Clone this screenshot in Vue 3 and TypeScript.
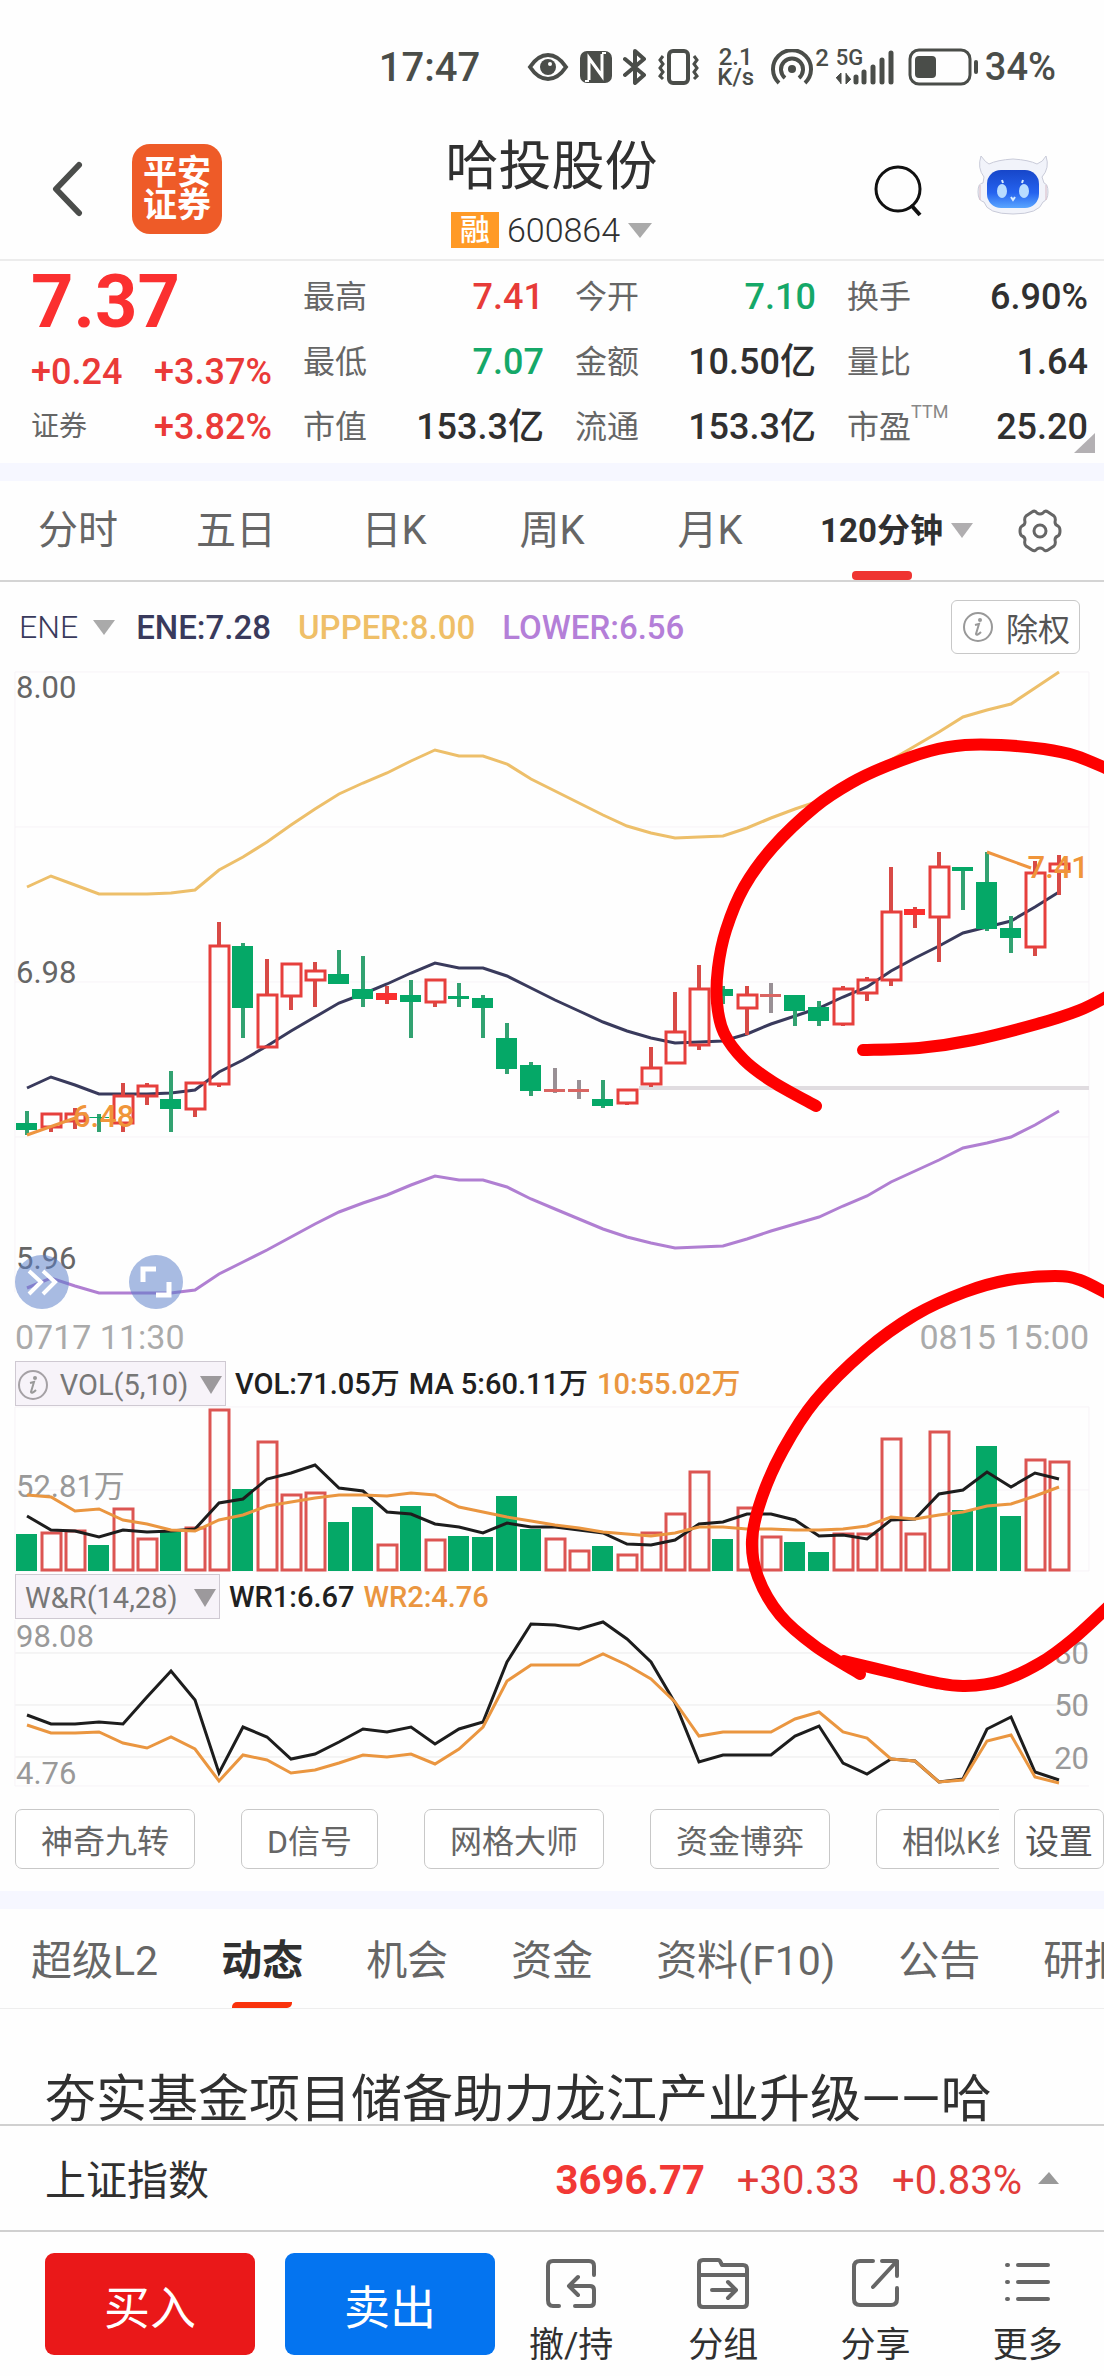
<script setup lang="ts">
type Kind = 'up' | 'down' | 'flat' | 'solid'
interface Candle { kind: Kind; high: number; top: number; bottom: number; low: number }
type Point = [number, number]

const STEP = 24
const FIRST = 27
const xAt = (i: number): number => FIRST + i * STEP
const line = (ys: number[]): string => ys.map((y, i) => `${xAt(i)},${y}`).join(' ')

const rawCandles: [Kind, number, number, number, number][] = [
  ['down', 1111, 1123, 1130, 1135], ['up', 1113, 1113, 1128, 1132], ['up', 1108, 1113, 1122, 1129],
  ['down', 1114, 1117, 1118, 1132], ['up', 1083, 1095, 1124, 1132], ['up', 1083, 1085, 1097, 1105],
  ['down', 1071, 1099, 1109, 1132], ['up', 1082, 1082, 1110, 1117], ['up', 922, 945, 1085, 1087],
  ['down', 943, 946, 1008, 1038], ['up', 959, 994, 1048, 1048], ['up', 963, 963, 997, 1010],
  ['up', 962, 970, 981, 1007], ['down', 950, 974, 984, 984], ['down', 956, 989, 999, 1007],
  ['solid', 986, 993, 1000, 1004], ['down', 980, 995, 1002, 1038], ['up', 979, 979, 1003, 1007],
  ['down', 983, 996, 999, 1007], ['down', 995, 998, 1008, 1038], ['down', 1023, 1038, 1069, 1074],
  ['down', 1062, 1065, 1091, 1096], ['flat', 1068, 1089, 1092, 1093], ['flat', 1080, 1089, 1092, 1099],
  ['down', 1080, 1099, 1106, 1108], ['up', 1089, 1089, 1104, 1105], ['up', 1047, 1067, 1085, 1087],
  ['up', 992, 1031, 1064, 1064], ['up', 965, 988, 1046, 1050], ['down', 986, 989, 996, 1004],
  ['up', 986, 994, 1009, 1035], ['flat', 983, 994, 997, 1013], ['down', 995, 995, 1011, 1026],
  ['down', 1001, 1007, 1021, 1026], ['up', 986, 988, 1025, 1026], ['up', 977, 979, 994, 1001],
  ['up', 867, 911, 981, 986], ['solid', 907, 909, 915, 928], ['up', 852, 866, 918, 962],
  ['down', 867, 867, 871, 910], ['down', 852, 882, 929, 931], ['down', 916, 928, 938, 953],
  ['up', 861, 872, 948, 956], ['up', 855, 863, 872, 895],
]
const candles: Candle[] = rawCandles.map(([kind, high, top, bottom, low]) => ({ kind, high, top, bottom, low }))

/* Hollow bodies are transparent, so their wick stops at the body's edges */
const wick = (c: Candle, i: number): string =>
  c.kind === 'up'
    ? `M${xAt(i)} ${c.high}V${c.top}M${xAt(i)} ${c.bottom}V${c.low}`
    : `M${xAt(i)} ${c.high}V${c.low}`

const upper = [887, 876, 885, 894, 894, 894, 893, 890, 870, 857, 842, 825, 809, 794, 783, 773, 761, 750, 756, 756, 764, 779, 791, 803, 815, 826, 833, 838, 837, 836, 828, 818, 809, 801, 787, 777, 760, 746, 732, 717, 710, 704, 688, 672]
const ene = [1088, 1077, 1085, 1094, 1094, 1094, 1093, 1090, 1072, 1060, 1046, 1031, 1017, 1003, 994, 984, 973, 963, 968, 968, 976, 988, 1000, 1011, 1022, 1031, 1038, 1043, 1042, 1041, 1034, 1024, 1016, 1008, 997, 987, 971, 958, 946, 933, 927, 921, 907, 892]
const lower = [1288, 1278, 1286, 1293, 1293, 1293, 1293, 1290, 1274, 1262, 1250, 1237, 1224, 1212, 1203, 1195, 1185, 1176, 1180, 1180, 1187, 1199, 1209, 1219, 1229, 1237, 1243, 1248, 1247, 1246, 1239, 1231, 1224, 1217, 1206, 1196, 1182, 1171, 1160, 1148, 1143, 1137, 1125, 1111]

const BASE = 1571
const volumeTops = [1534, 1532, 1530, 1545, 1508, 1538, 1531, 1527, 1409, 1489, 1441, 1494, 1492, 1522, 1507, 1544, 1506, 1539, 1536, 1537, 1496, 1529, 1538, 1550, 1546, 1554, 1532, 1513, 1471, 1539, 1507, 1536, 1542, 1552, 1533, 1533, 1438, 1533, 1431, 1510, 1446, 1516, 1459, 1461]
const ma5 = [1516, 1530, 1531, 1537, 1530, 1532, 1531, 1529, 1503, 1499, 1479, 1473, 1465, 1488, 1491, 1512, 1514, 1524, 1527, 1533, 1523, 1527, 1527, 1530, 1533, 1544, 1545, 1540, 1524, 1522, 1514, 1514, 1520, 1536, 1535, 1539, 1520, 1519, 1494, 1490, 1472, 1487, 1473, 1479]
const ma10 = [1495, 1497, 1511, 1509, 1520, 1524, 1530, 1531, 1520, 1515, 1506, 1502, 1498, 1495, 1495, 1496, 1493, 1495, 1507, 1512, 1517, 1521, 1525, 1528, 1532, 1534, 1536, 1533, 1527, 1527, 1529, 1529, 1530, 1530, 1529, 1526, 1517, 1519, 1515, 1512, 1506, 1504, 1496, 1487]

const wr1 = [1715, 1724, 1724, 1722, 1724, 1697, 1671, 1700, 1773, 1727, 1737, 1759, 1754, 1742, 1729, 1732, 1727, 1744, 1729, 1722, 1662, 1624, 1625, 1629, 1622, 1639, 1662, 1703, 1762, 1755, 1755, 1755, 1736, 1726, 1763, 1774, 1759, 1761, 1782, 1779, 1729, 1717, 1772, 1780]
const wr2 = [1725, 1733, 1733, 1732, 1743, 1748, 1737, 1749, 1781, 1755, 1760, 1773, 1770, 1763, 1755, 1757, 1754, 1764, 1749, 1727, 1681, 1665, 1665, 1665, 1654, 1665, 1679, 1702, 1736, 1732, 1732, 1732, 1719, 1712, 1732, 1738, 1759, 1761, 1782, 1780, 1741, 1735, 1777, 1783]

/* Catmull-Rom spline through hand-drawn points */
function smooth(p: Point[]): string {
  let d = `M${p[0][0]} ${p[0][1]}`
  for (let i = 0; i < p.length - 1; i++) {
    const a = p[Math.max(i - 1, 0)]
    const b = p[i]
    const c = p[i + 1]
    const e = p[Math.min(i + 2, p.length - 1)]
    d += `C${b[0] + (c[0] - a[0]) / 6} ${b[1] + (c[1] - a[1]) / 6} ${c[0] - (e[0] - b[0]) / 6} ${c[1] - (e[1] - b[1]) / 6} ${c[0]} ${c[1]}`
  }
  return d
}
const marks: string[] = [
  smooth([[816, 1106], [773, 1082], [744, 1060], [724, 1033], [717, 1003], [718, 968], [726, 930], [744, 887], [773, 847], [815, 807], [851, 783], [887, 766], [930, 751], [965, 745], [1001, 745], [1044, 749], [1076, 756], [1110, 770]]),
  smooth([[863, 1050], [919, 1048], [973, 1040], [1037, 1024], [1080, 1010], [1110, 995]]),
  smooth([[1110, 1295], [1080, 1280], [1055, 1276], [1008, 1280], [965, 1292], [915, 1315], [865, 1351], [815, 1401], [783, 1450], [762, 1497], [752, 1540], [758, 1577], [780, 1615], [815, 1646], [860, 1674]]),
  smooth([[844, 1661], [894, 1673], [937, 1683], [965, 1686], [1001, 1681], [1040, 1663], [1073, 1639], [1110, 1605]]),
]

interface Stat { label: string; value: string; tone?: string; sup?: string }
const stats: Stat[] = [
  { label: '最高', value: '7.41', tone: 'red' }, { label: '今开', value: '7.10', tone: 'green' }, { label: '换手', value: '6.90%' },
  { label: '最低', value: '7.07', tone: 'green' }, { label: '金额', value: '10.50亿' }, { label: '量比', value: '1.64' },
  { label: '市值', value: '153.3亿' }, { label: '流通', value: '153.3亿' }, { label: '市盈', value: '25.20', sup: 'TTM' },
]
const periods = ['分时', '五日', '日K', '周K', '月K']
const tools = ['神奇九转', 'D信号', '网格大师', '资金博弈', '相似K线']
const sections = ['超级L2', '动态', '机会', '资金', '资料(F10)', '公告', '研报']
</script>

<template>
  <div class="app">
    <div class="status">
      <span class="clock">17:47</span>
      <svg width="42" height="36" viewBox="0 0 42 36"><path d="M3 18Q11 6 21 6T39 18Q31 30 21 30T3 18Z" fill="none" stroke="currentColor" stroke-width="4" /><circle cx="21" cy="18" r="8" fill="currentColor" /><circle cx="23" cy="15" r="2" fill="#fff" /></svg>
      <svg width="32" height="36" viewBox="0 0 32 36"><rect x="0" y="2" width="32" height="32" rx="7" fill="currentColor" /><path d="M9 31V9L22 27V5" fill="none" stroke="#fff" stroke-width="3" /><path d="M5 32L9 32M22 4L26 4" stroke="#fff" stroke-width="2" /></svg>
      <svg width="24" height="36" viewBox="0 0 24 36"><path d="M2 10L21 26L12 34V2L21 10L2 26" fill="none" stroke="currentColor" stroke-width="4" stroke-linejoin="round" stroke-linecap="round" /></svg>
      <svg width="41" height="36" viewBox="0 0 41 36"><rect x="11" y="2" width="19" height="32" rx="4" fill="none" stroke="currentColor" stroke-width="4" /><path d="M5 7L2 11L5 15L2 19L5 23L2 27L5 30M36 7L39 11L36 15L39 19L36 23L39 27L36 30" fill="none" stroke="currentColor" stroke-width="3" /></svg>
      <span class="speed"><span>2.1</span><span>K/s</span></span>
      <svg width="42" height="36" viewBox="0 0 42 36"><circle cx="21" cy="20" r="4" fill="currentColor" /><path d="M8 34A19 19 0 1 1 34 34M14 29A11 11 0 1 1 28 29" fill="none" stroke="currentColor" stroke-width="4" /></svg>
      <span class="sim">2</span>
      <span class="network">
        <span class="gen">5G</span>
        <svg width="58" height="36" viewBox="0 0 58 36"><path d="M0 29L5 24V35M10 24V35L15 30" fill="currentColor" stroke="currentColor" stroke-width="1" /><path d="M20 33V28M28 33V23M37 33V18M46 33V11M55 33V4" stroke="currentColor" stroke-width="5" stroke-linecap="round" /></svg>
      </span>
      <svg class="battery" width="72" height="38" viewBox="0 0 72 38"><rect x="2" y="2" width="60" height="34" rx="9" fill="none" stroke="currentColor" stroke-width="3" /><rect x="7" y="8" width="21" height="22" rx="4" fill="currentColor" /><path d="M68 14V24" stroke="currentColor" stroke-width="4" stroke-linecap="round" /></svg>
      <span class="charge">34%</span>
    </div>

    <header class="header">
      <button class="plain back" aria-label="返回"><svg width="32" height="56" viewBox="0 0 32 56"><path d="M28 4L5 28L28 52" fill="none" stroke="#4b4d4b" stroke-width="6" stroke-linecap="round" stroke-linejoin="round" /></svg></button>
      <div class="brand"><span>平安</span><span>证券</span></div>
      <div class="title">
        <h1>哈投股份</h1>
        <button class="plain code"><span class="badge">融</span>600864<svg width="24" height="15" viewBox="0 0 24 15"><path d="M0 0H24L12 15Z" fill="#aaa" /></svg></button>
      </div>
      <button class="plain search" aria-label="搜索"><svg width="50" height="54" viewBox="0 0 50 54"><circle cx="25" cy="26" r="22" fill="none" stroke="#111" stroke-width="3" /><path d="M38 42L47 52" stroke="#111" stroke-width="4" /></svg></button>
      <button class="plain bot" aria-label="智能助手">
        <svg width="72" height="60" viewBox="0 0 72 60">
          <defs><linearGradient id="face" x1="0" y1="0" x2="0" y2="1"><stop offset="0" stop-color="#1746c9" /><stop offset=".6" stop-color="#2563ef" /><stop offset="1" stop-color="#5aa6ff" /></linearGradient></defs>
          <path d="M4 1Q9 8 12 9Q20 5 36 4Q52 5 60 9Q66 7 69 1Q73 13 65 22L67 28Q71 29 71 37T66 47Q62 59 36 59T7 47Q1 46 1 37T6 28L7 22Q0 13 4 1Z" fill="#f1f3fa" stroke="#c9cbd9" />
          <path d="M3 30V45M69 30V45" stroke="#d7b9c4" stroke-width="1" />
          <rect x="10" y="15" width="52" height="38" rx="14" fill="url(#face)" />
          <ellipse cx="25" cy="36" rx="5" ry="7" fill="#b8dcff" /><ellipse cx="47" cy="36" rx="5" ry="7" fill="#b8dcff" />
          <path d="M34 42L36 45L38 42M25 25L26 28M46 25L45 28" stroke="#d9ecff" stroke-width="2" fill="none" />
        </svg>
      </button>
    </header>

    <section class="quote">
      <div class="last">
        <strong>7.37</strong>
        <div class="change"><span>+0.24</span><span>+3.37%</span></div>
        <div class="sector"><span class="name">证券</span><span>+3.82%</span></div>
      </div>
      <dl class="stats">
        <div v-for="s in stats" :key="s.label" class="stat">
          <dt>{{ s.label }}<sup v-if="s.sup">{{ s.sup }}</sup></dt>
          <dd :class="s.tone">{{ s.value }}</dd>
        </div>
      </dl>
      <svg class="corner" width="21" height="20" viewBox="0 0 21 20"><path d="M21 0V20H0Z" fill="#b3b0b3" /></svg>
    </section>
    <div class="strip"></div>

    <nav class="periods">
      <button v-for="p in periods" :key="p" class="plain">{{ p }}</button>
      <button class="plain active"><span>120分钟</span><svg width="22" height="15" viewBox="0 0 22 15"><path d="M0 0H22L11 15Z" fill="#b0aeb0" /></svg></button>
      <button class="plain gear" aria-label="图表设置"><svg width="44" height="44" viewBox="0 0 44 44"><path d="M14 3Q17 1 19 4Q22 6 25 4Q27 1 30 3L36 7Q38 9 37 13Q37 16 40 17Q42 18 42 22T40 27Q37 28 37 31Q38 35 36 37L30 41Q27 43 25 40Q22 38 19 40Q17 43 14 41L8 37Q6 35 7 31Q7 28 4 27Q2 26 2 22T4 17Q7 16 7 13Q6 9 8 7Z" fill="none" stroke="#666" stroke-width="3" /><circle cx="22" cy="22" r="6" fill="none" stroke="#666" stroke-width="3" /></svg></button>
    </nav>

    <section class="charts">
      <div class="legend">
        <button class="plain picker">ENE<svg width="22" height="15" viewBox="0 0 22 15"><path d="M0 0H22L11 15Z" fill="#aaa" /></svg></button>
        <span class="navy">ENE:7.28</span><span class="gold">UPPER:8.00</span><span class="violet">LOWER:6.56</span>
        <button class="adjust"><svg width="30" height="30" viewBox="0 0 30 30"><circle cx="15" cy="15" r="14" fill="none" stroke="#999" stroke-width="2" /><circle cx="17" cy="8" r="2" fill="#999" /><path d="M12 13L16 12L13 22Q14 24 18 20" fill="none" stroke="#999" stroke-width="2" /></svg>除权</button>
      </div>

      <svg class="plot" viewBox="0 672 1104 624">
        <path d="M15 672H1089V1292M15 672V1292M15 827H1089M15 982H1089M15 1137H1089" class="grid faint" />
        <g class="axis dark"><text x="16" y="698">8.00</text><text x="16" y="983">6.98</text><text x="16" y="1269">5.96</text></g>
        <path d="M639 1088H1089" stroke="#e0dce0" stroke-width="4" />
        <polyline :points="line(ene)" class="curve" stroke="#393a5c" />
        <g v-for="(c, i) in candles" :key="i">
          <path :d="wick(c, i)" :class="['wick', c.kind]" />
          <rect v-if="c.kind === 'up'" :x="xAt(i) - 9" :y="c.top + 1" width="19" :height="c.bottom - c.top - 2" class="hollow" />
          <rect v-else :x="xAt(i) - 11" :y="c.top" width="21" :height="c.bottom - c.top" :class="['body', c.kind]" />
        </g>
        <polyline :points="line(upper)" class="curve" stroke="#edbf6a" />
        <polyline :points="line(lower)" class="curve" stroke="#b07fd2" />
        <path d="M27 1135L78 1117M987 852L1031 868" class="curve" stroke="#ee9540" />
        <g class="axis amber"><text x="73" y="1127">6.48</text><text x="1089" y="878" text-anchor="end">7.41</text></g>
        <g fill="#5b7fc9" fill-opacity=".53"><circle cx="42" cy="1282" r="27" /><circle cx="156" cy="1282" r="27" /></g>
        <path d="M29 1271L41 1282L29 1294M43 1271L55 1282L43 1294" fill="none" stroke="#fff" stroke-width="4" />
        <path d="M143 1282V1269H156M156 1295H169V1282" fill="none" stroke="#fff" stroke-width="5" />
      </svg>
      <div class="dates"><time>0717 11:30</time><time>0815 15:00</time></div>

      <div class="indicator">
        <button class="select"><svg width="30" height="30" viewBox="0 0 30 30"><circle cx="15" cy="15" r="14" fill="none" stroke="#a5a1a5" stroke-width="2" /><circle cx="17" cy="8" r="2" fill="#999" /><path d="M12 13L16 12L13 22Q14 24 18 20" fill="none" stroke="#999" stroke-width="2" /></svg>VOL(5,10)<svg width="22" height="18" viewBox="0 0 22 18"><path d="M0 0H22L11 18Z" fill="#9c999c" /></svg></button>
        <span>VOL:71.05万</span><span>MA 5:60.11万</span><span class="orange">10:55.02万</span>
      </div>
      <svg class="plot" viewBox="0 1406 1104 168">
        <path d="M15 1407H1089V1571H15ZM15 1490H1089" class="grid faint" />
        <text x="16" y="1497" class="axis">52.81万</text>
        <template v-for="(t, i) in volumeTops" :key="i">
          <rect v-if="candles[i].kind === 'down'" :x="xAt(i) - 11" :y="t" width="21" :height="BASE - t" class="body down" />
          <rect v-else :x="xAt(i) - 9" :y="t + 1" width="19" :height="BASE - t - 2" class="hollow thin" />
        </template>
        <polyline :points="line(ma5)" class="curve" stroke="#1d1d1d" />
        <polyline :points="line(ma10)" class="curve" stroke="#ea9640" />
      </svg>

      <div class="indicator">
        <button class="select wr">W&amp;R(14,28)<svg width="22" height="18" viewBox="0 0 22 18"><path d="M0 0H22L11 18Z" fill="#9c999c" /></svg></button>
        <span>WR1:6.67</span><span class="orange">WR2:4.76</span>
      </div>
      <svg class="plot" viewBox="0 1619 1104 172">
        <path d="M15 1653H1089M15 1705H1089M15 1757H1089" class="grid" />
        <path d="M15 1620V1786H1089" class="grid faint" />
        <g class="axis"><text x="16" y="1647">98.08</text><text x="16" y="1784">4.76</text></g>
        <g class="axis" text-anchor="end"><text x="1089" y="1664">80</text><text x="1089" y="1716">50</text><text x="1089" y="1769">20</text></g>
        <polyline :points="line(wr1)" class="curve" stroke="#1d1d1d" />
        <polyline :points="line(wr2)" class="curve" stroke="#ea9640" />
      </svg>

      <svg class="marks" viewBox="0 582 1104 1209" aria-hidden="true"><path v-for="(d, i) in marks" :key="i" :d="d" /></svg>
    </section>

    <div class="tools">
      <div class="scroller"><button v-for="t in tools" :key="t" class="chip">{{ t }}</button></div>
      <button class="chip setup">设置</button>
    </div>
    <div class="strip"></div>

    <nav class="sections">
      <a v-for="s in sections" :key="s" href="#" :class="{ current: s === '动态' }">{{ s }}</a>
    </nav>

    <article class="news"><h2>夯实基金项目储备助力龙江产业升级——哈</h2></article>

    <div class="index">
      <span class="index-name">上证指数</span>
      <strong>3696.77</strong><span>+30.33</span><span>+0.83%</span>
      <svg width="21" height="12" viewBox="0 0 21 12"><path d="M0 12H21L11 0Z" fill="#999" /></svg>
    </div>

    <footer class="actions">
      <button class="trade buy">买入</button>
      <button class="trade sell">卖出</button>
      <div class="menu">
        <button class="plain"><svg width="56" height="56" viewBox="0 0 56 56"><path d="M51 18V9Q51 4 46 4H10Q5 4 5 9V43Q5 49 10 49H16M32 49H47Q51 49 51 45V33Q51 29 47 29H27M35 20L26 29L35 38" /></svg>撤/持</button>
        <button class="plain"><svg width="56" height="56" viewBox="0 0 56 56"><path d="M4 7Q4 3 8 3H23Q25 3 26 6L27 8H48Q52 8 52 12V46Q52 50 48 50H8Q4 50 4 46ZM4 18H52M17 33H40M33 25L41 33L33 41" /></svg>分组</button>
        <button class="plain"><svg width="56" height="56" viewBox="0 0 56 56"><path d="M25 4H12Q6 4 6 10V42Q6 48 12 48H43Q49 48 49 42V31M34 4H49V19M49 4L25 30" /></svg>分享</button>
        <button class="plain"><svg width="56" height="56" viewBox="0 0 56 56"><path d="M7 8H8M18 8H48M7 25H8M18 25H48M7 42H8M18 42H48" /></svg>更多</button>
      </div>
    </footer>
  </div>
</template>

<style>
body { background: #fefefe; }
</style>

<style scoped>
.app { position: relative; overflow: hidden; background: #fefefe; color: #303030; font-family: Roboto, "Noto Sans CJK SC", sans-serif; }
.app * { box-sizing: border-box; }
svg { display: block; flex: none; }
button { font-family: inherit; color: inherit; margin: 0; cursor: pointer; }
.plain { border: 0; padding: 0; background: none; }
h1, h2, dl, dd { margin: 0; font-weight: 400; }

.status { display: flex; align-items: center; justify-content: flex-end; gap: 11px; height: 134px; padding-right: 48px; color: #4a4d49; font-weight: 500; }
.clock { font-size: 40px; margin-right: 36px; }
.speed { display: flex; flex-direction: column; align-items: center; width: 41px; margin: 0 4px 0 5px; font-size: 24px; line-height: 20px; }
.sim { font-size: 24px; margin: 0 -4px 18px -9px; }
.network { position: relative; }
.gen { position: absolute; left: 0; top: -2px; font-size: 22px; line-height: 22px; }
.battery { margin-left: 3px; }
.charge { font-size: 38px; margin-left: -6px; }

.header { display: flex; align-items: flex-start; height: 127px; padding: 0 55px 0 51px; border-bottom: 2px solid #ececec; }
.back { margin-top: 27px; }
.brand { display: flex; flex-direction: column; align-items: center; margin: 10px 0 0 49px; width: 90px; height: 90px; padding-top: 12px; border-radius: 18px; background: #ee5b28; color: #fff; font-size: 34px; font-weight: 700; line-height: 33px; }
.title { flex: 1; display: flex; flex-direction: column; align-items: center; padding-left: 8px; }
h1 { font-size: 53px; line-height: 66px; }
.code { display: flex; align-items: center; height: 60px; font-size: 34px; font-weight: 300; gap: 8px; }
.badge { width: 48px; height: 36px; background: #ff9a26; color: #fff; font-size: 30px; line-height: 36px; font-weight: 500; }
.search { margin: 29px 54px 0 0; }
.bot { margin-top: 21px; }

.quote { position: relative; display: flex; padding: 3px 16px 4px 31px; gap: 31px; font-size: 36px; font-weight: 500; line-height: 44px; }
.last { flex: 241; color: #ea3a38; }
.last strong { display: block; font-size: 74px; line-height: 76px; font-weight: 700; color: #fb3030; }
.change, .sector { display: flex; justify-content: space-between; align-items: center; height: 64px; }
.sector { height: 46px; }
.sector .name { color: #666; font-size: 28px; font-weight: 400; }
.stats { flex: 785; display: grid; grid-template-columns: repeat(3, 1fr); column-gap: 31px; }
.stat { display: flex; justify-content: space-between; align-items: center; height: 65px; }
.stat dt { position: relative; font-size: 32px; font-weight: 400; color: #666; }
.stat dd { font-weight: 500; }
.stat sup { position: absolute; left: 100%; top: -2px; font-size: 18px; line-height: 18px; color: #888; }
.red { color: #e73b38; }
.green { color: #15a868; }
.corner { position: absolute; right: 9px; bottom: 10px; }
.strip { height: 18px; background: #f6f7ff; }

.periods { display: grid; grid-template-columns: repeat(5, 158fr) 217fr 66fr 31fr; height: 101px; border-bottom: 2px solid #d4d4d4; color: #666; }
.periods button { display: flex; align-items: center; justify-content: center; font-size: 40px; line-height: 48px; padding-right: 2px; }
.periods .active { font-size: 33px; font-weight: 700; color: #303030; gap: 8px; padding-right: 4px; }
.periods .gear { padding: 0; }
.active span { position: relative; line-height: 99px; }
.active span::after { content: ""; position: absolute; left: 50%; bottom: 0; width: 60px; height: 9px; margin-left: -30px; border-radius: 4px; background: #ef3431; }

.charts { position: relative; }
.legend { display: flex; align-items: center; gap: 27px; height: 90px; padding: 0 24px 0 19px; font-size: 33px; font-weight: 500; }
.picker { display: flex; align-items: center; gap: 15px; margin-right: -6px; font-size: 32px; font-weight: 300; color: #393a5c; }
.navy { color: #393a5c; }
.gold { color: #efbf68; }
.violet { color: #b47fd8; }
.adjust { display: flex; align-items: center; justify-content: space-between; width: 129px; height: 54px; margin-left: auto; padding: 0 9px 0 11px; border: 1px solid #c8c8c8; border-radius: 6px; background: #fff; color: #555; font-size: 32px; }
.plot { width: 100%; overflow: visible; }
.grid { fill: none; stroke: #ebebeb; stroke-width: 1; }
.faint { stroke: #f7f3f7; }
.curve { fill: none; stroke-width: 3; }
.wick { stroke-width: 4; }
.wick.up, .wick.solid { stroke: #d84a46; }
.wick.down { stroke: #32a271; }
.wick.flat { stroke: #999095; }
.body.down { fill: #05a867; }
.body.solid { fill: #fb2f2f; }
.body.flat { fill: #d96562; }
.hollow { fill: none; stroke: #e63f3c; stroke-width: 3; }
.thin { stroke: #dc5552; }
.axis { font-size: 31px; fill: #999; }
.dark { fill: #666; }
.amber { fill: #f0953a; font-weight: 500; }
.dates { display: flex; justify-content: space-between; height: 65px; padding: 21px 15px 0; font-size: 34px; line-height: 40px; color: #aaa; }
.indicator { display: flex; align-items: center; gap: 9px; height: 45px; padding-left: 15px; font-size: 29px; font-weight: 500; line-height: 45px; color: #202020; }
.indicator span { padding-top: 2px; }
.select { display: flex; align-items: center; justify-content: space-between; width: 211px; height: 45px; padding: 2px 3px 0 2px; border: 1px solid #cfc9d2; background: #f7f3f9; color: #777; font-size: 29px; }
.select.wr { width: 205px; padding-left: 9px; }
.orange { color: #ea9640; }
.marks { position: absolute; inset: 0; width: 100%; height: 100%; pointer-events: none; }
.marks path { fill: none; stroke: #fe0000; stroke-width: 12; stroke-linecap: round; stroke-linejoin: round; }

.tools { display: flex; gap: 15px; padding: 18px 0 22px 15px; }
.scroller { flex: 1; display: flex; gap: 46px; overflow: hidden; }
.chip { flex: none; height: 60px; padding: 0 25px; border: 1px solid #c8c8c8; border-radius: 7px; background: #fff; color: #666; font-size: 32px; white-space: nowrap; }
.setup { width: 90px; padding: 0; font-size: 34px; color: #555; }

.sections { display: flex; gap: 63px; height: 100px; padding-left: 31px; border-bottom: 1px solid #eee; font-size: 41px; line-height: 105px; white-space: nowrap; }
.sections a { position: relative; flex: none; height: 99px; color: #666; text-decoration: none; }
.sections .current { color: #303030; font-weight: 700; }
.current::after { content: ""; position: absolute; left: 50%; bottom: 0; width: 60px; height: 6px; margin-left: -30px; border-radius: 5px 0; background: #f9320c; }

.news { height: 117px; padding: 57px 45px 0; overflow: hidden; border-bottom: 2px solid #d0d0d0; }
h2 { font-size: 51px; line-height: 68px; white-space: nowrap; }

.index { display: flex; align-items: center; gap: 32px; height: 106px; padding: 6px 45px 0; border-bottom: 2px solid #d0d0d0; font-size: 40px; line-height: 48px; color: #e23c3a; }
.index-name { margin-right: auto; font-size: 41px; color: #303030; }
.index strong { font-weight: 700; color: #f23835; }
.index svg { margin: -6px 0 0 -16px; }

.actions { display: flex; align-items: flex-start; padding: 21px 0 21px 45px; }
.trade { flex: none; width: 210px; height: 102px; border: 0; border-radius: 9px; color: #fff; font-size: 46px; }
.buy { margin-right: 30px; background: #ea1819; }
.sell { background: #0474f0; }
.menu { flex: 1; display: grid; grid-template-columns: repeat(4, 1fr); }
.menu button { display: flex; flex-direction: column; align-items: center; font-size: 35px; line-height: 46px; }
.menu svg { margin-top: 4px; margin-bottom: 10px; fill: none; stroke: #666; stroke-width: 4; stroke-linecap: round; stroke-linejoin: round; }
</style>
